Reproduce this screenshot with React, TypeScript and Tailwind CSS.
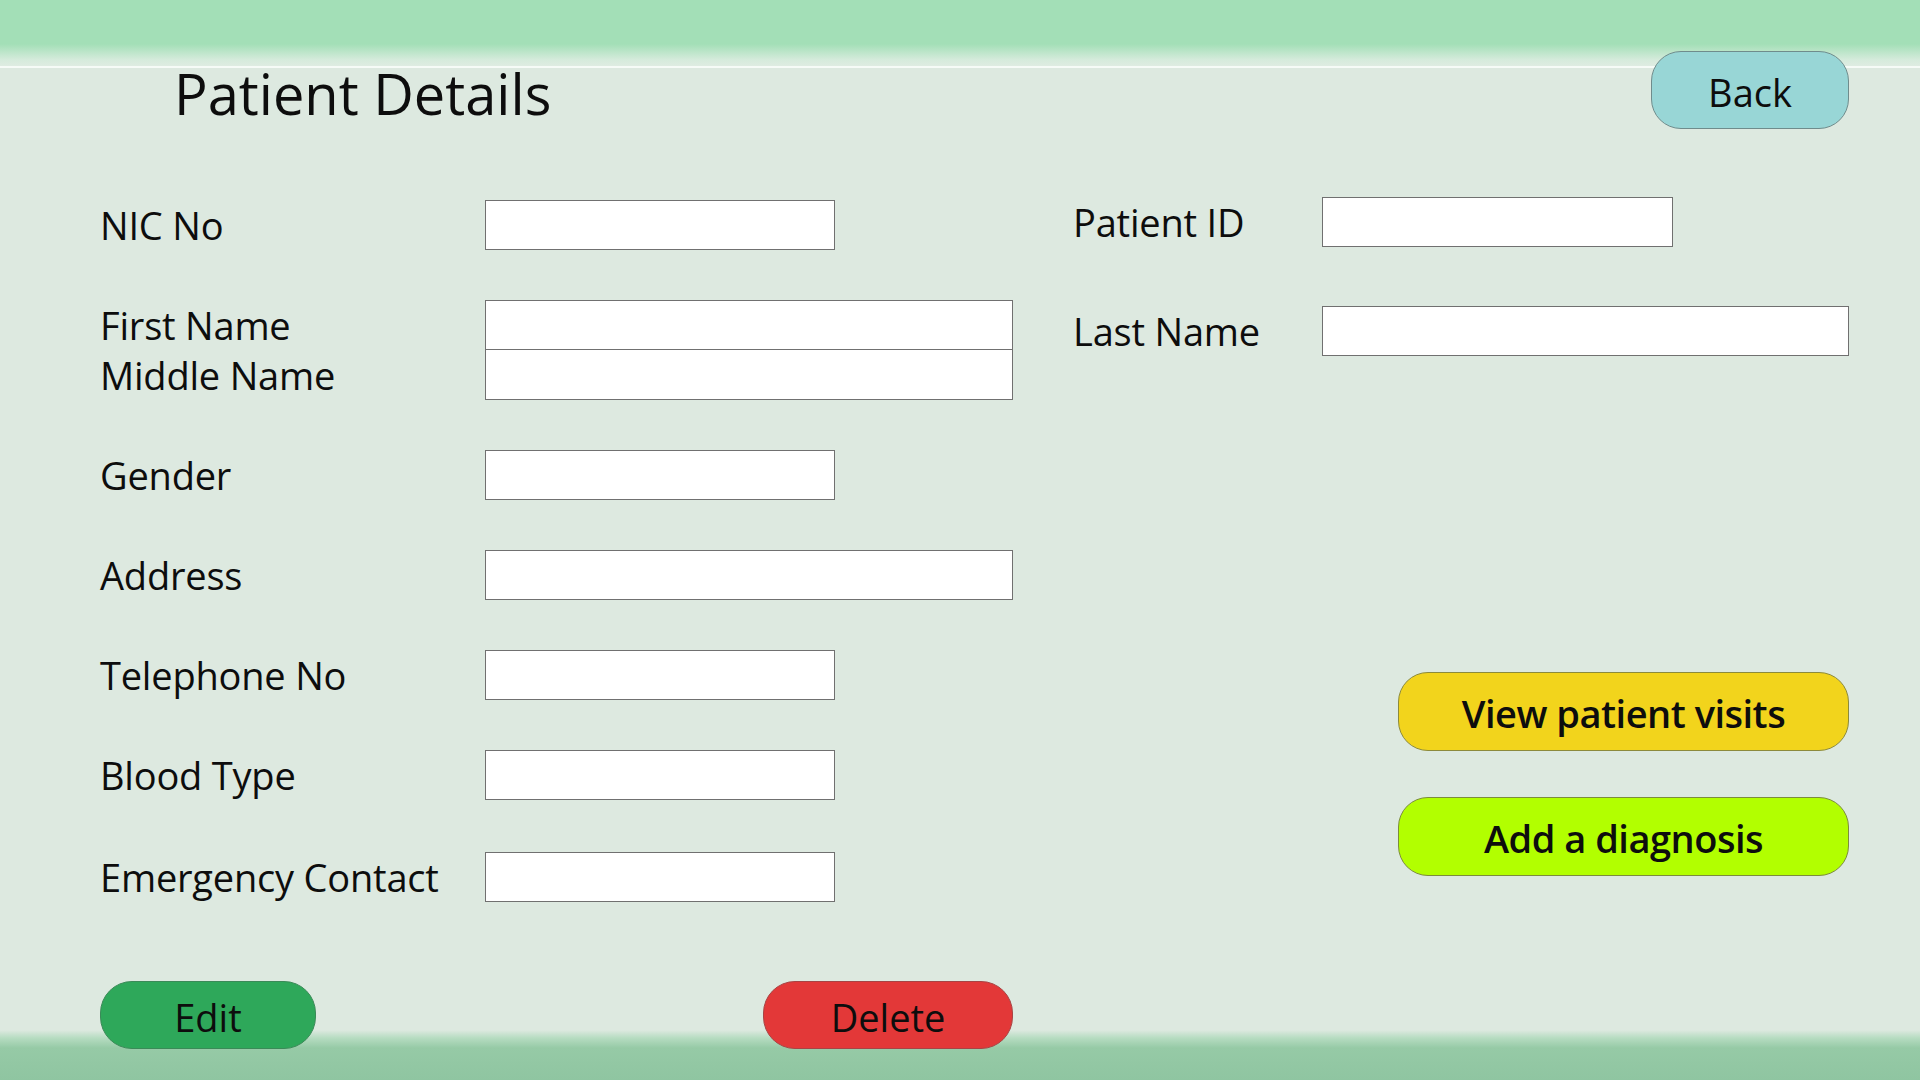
import React from "react"

// 输入框
function Field({ className = "" }: { className?: string }) {
  return <div className={"h-[50px] bg-white border border-[#707070] " + className} />
}

// 标签
function Label({ children }: { children: React.ReactNode }) {
  return <span className="text-[38px] leading-none text-[#0d0d0d] tracking-[-0.2px]">{children}</span>
}

export default function App() {
  return (
    <div className="relative w-full h-[1080px] overflow-hidden bg-[#dde9e0] font-['Open_Sans',sans-serif]">
      {/* 顶部色带 */}
      <div className="absolute inset-x-0 top-0 h-[70px] bg-[linear-gradient(to_bottom,#a3dfb7_0px,#a3dfb7_44px,#d6ebdc_60px,#dfece2_66px,#f6fbf7_66px,#f6fbf7_68px,#dde9e0_68px)]" />
      {/* 底部色带 */}
      <div className="absolute inset-x-0 bottom-0 h-[50px] bg-[linear-gradient(to_bottom,#dde9e0_0px,#b6dcc1_8px,#96caa6_18px,#8fc5a1_50px)]" />

      <div className="relative pl-[100px] pr-[71px]">
        {/* 标题栏 */}
        <div className="flex items-start justify-between pt-[51px]">
          <h1 className="ml-[74px] mt-[14px] text-[56px] leading-none text-[#0d0d0d]">Patient Details</h1>
          <button className="w-[198px] h-[78px] pt-[4px] rounded-[30px] bg-[#98d6d6] border border-[#6f8c8c] text-[38px] text-[#0d0d0d] flex items-center justify-center">
            Back
          </button>
        </div>

        <div className="flex items-start gap-[60px] mt-[68px]">
          {/* 左侧表单 */}
          <div className="w-[913px] pt-[3px] flex flex-col">
            <div className="grid grid-cols-[385px_528px] items-center">
              <Label>NIC No</Label>
              <Field className="w-[350px]" />

              <div className="col-span-2 h-[50px]" />

              <Label>First Name</Label>
              <Field className="w-[528px]" />
              <Label>Middle Name</Label>
              <Field className="w-[528px] border-t-0" />

              <div className="col-span-2 h-[50px]" />

              <Label>Gender</Label>
              <Field className="w-[350px]" />

              <div className="col-span-2 h-[50px]" />

              <Label>Address</Label>
              <Field className="w-[528px]" />

              <div className="col-span-2 h-[50px]" />

              <Label>Telephone No</Label>
              <Field className="w-[350px]" />

              <div className="col-span-2 h-[50px]" />

              <Label>Blood Type</Label>
              <Field className="w-[350px]" />

              <div className="col-span-2 h-[52px]" />

              <Label>Emergency Contact</Label>
              <Field className="w-[350px]" />
            </div>

            <div className="flex justify-between mt-[79px]">
              <button className="w-[216px] h-[68px] pt-[4px] rounded-[32px] bg-[#2ea85a] border border-[#3b8a58] text-[38px] text-[#0d0d0d] flex items-center justify-center">
                Edit
              </button>
              <button className="w-[250px] h-[68px] pt-[4px] rounded-[32px] bg-[#e33838] border border-[#a84444] text-[38px] text-[#0d0d0d] flex items-center justify-center">
                Delete
              </button>
            </div>
          </div>

          {/* 右侧 */}
          <div className="flex-1 flex flex-col">
            <div className="grid grid-cols-[249px_1fr] items-center">
              <Label>Patient ID</Label>
              <Field className="w-[351px]" />
              <div className="col-span-2 h-[59px]" />
              <Label>Last Name</Label>
              <Field className="w-full" />
            </div>

            <div className="self-end flex flex-col gap-[46px] mt-[316px]">
              <button className="w-[451px] h-[79px] pt-[4px] rounded-[30px] bg-[#f2d41c] border border-[#8c8a3c] text-[38px] font-semibold tracking-[-0.5px] text-[#0d0d0d] flex items-center justify-center">
                View patient visits
              </button>
              <button className="w-[451px] h-[79px] pt-[4px] rounded-[30px] bg-[#b2ff00] border border-[#7c8c3c] text-[38px] font-semibold tracking-[-0.5px] text-[#0d0d0d] flex items-center justify-center">
                Add a diagnosis
              </button>
            </div>
          </div>
        </div>
      </div>
    </div>
  )
}
